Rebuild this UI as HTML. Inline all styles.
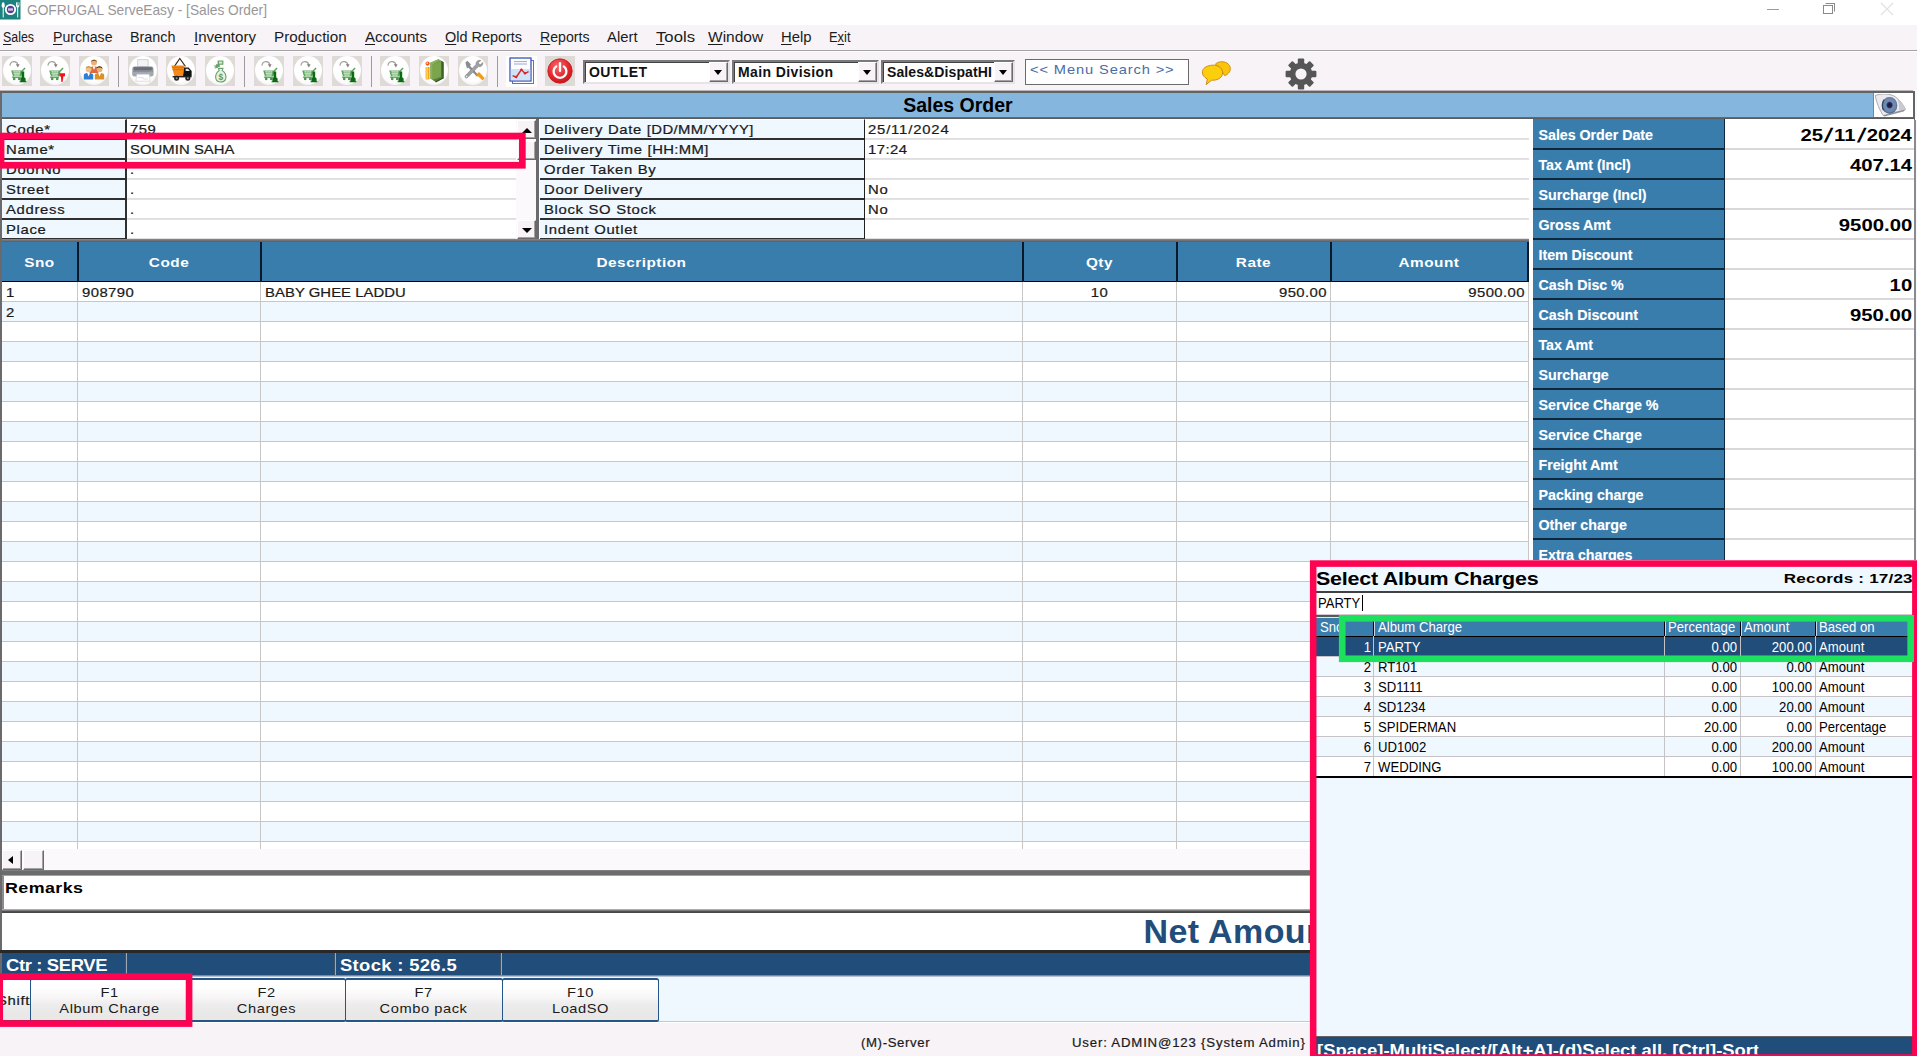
<!DOCTYPE html>
<html>
<head>
<meta charset="utf-8">
<title>GOFRUGAL ServeEasy - [Sales Order]</title>
<style>
*{box-sizing:border-box;margin:0;padding:0}
html,body{width:1917px;height:1056px;overflow:hidden;background:#f7f3f7;font-family:"Liberation Sans",sans-serif;}
.a{position:absolute}
.t{position:absolute;white-space:nowrap;color:#1a1a1a}
/* Verdana-like 10pt regular */
.v{-webkit-text-stroke:.22px #1a1a1a;font-size:13.5px;letter-spacing:.62px;line-height:20px;transform:scaleX(1.1);transform-origin:0 0}
.v.u{letter-spacing:.05px}.v.n{letter-spacing:.4px}.v.r{transform-origin:100% 0}.v.c{transform-origin:50% 0}
.vb{font-size:13.33px;font-weight:bold;letter-spacing:.45px;transform:scaleX(1.15);transform-origin:50% 0}
#titlebar{left:0;top:0;width:1917px;height:25px;background:#fff}
#menubar{left:0;top:25px;width:1917px;height:25px;background:#f7f3f7}
#menubar span{position:absolute;top:-.5px;font-size:15.2px;line-height:23px;color:#1b1b1b;white-space:nowrap;transform-origin:0 0}
#menubar u{text-decoration:underline;text-underline-offset:2px}
#tb{left:0;top:50px;width:1917px;height:41px;background:#f7f3f7;border-top:1px solid #a5a2a5;box-shadow:inset 0 1px 0 #fff}
.ic{position:absolute;top:5px;width:30px;height:30px;background:#dedbd6}
.ic:before{content:"";position:absolute;left:1px;top:0px;width:28px;height:29px;border-radius:50%;background:radial-gradient(circle at 50% 40%,#fff 60%,#f1efee 85%,#e6e3e0 100%)}
.sep{position:absolute;top:5px;width:1px;height:31px;background:#9c9a9c}
.dd{position:absolute;top:9px;height:24px;background:#fff;border:2px solid;border-color:#7b797b #e7e3e7 #e7e3e7 #7b797b;box-shadow:inset 1px 1px 0 #424142}
.dd b{position:absolute;left:4px;top:0;font-size:14px;line-height:20px;letter-spacing:0.4px;color:#111;white-space:nowrap}
.dd i{position:absolute;right:0;top:0;width:19px;height:20px;background:#f7f3f7;border:1px solid;border-color:#fff #6b696b #6b696b #fff;box-shadow:inset -1px -1px 0 #a5a2a5}
.dd i:after{content:"";position:absolute;left:4px;top:7px;border:4.5px solid transparent;border-top:5px solid #000;border-bottom:0}

.sb{background:#f7f3f7;border:1px solid;border-color:#fff #6b696b #6b696b #fff;box-shadow:inset -1px -1px 0 #a5a2a5}
.gh{top:242px;width:1.5px;height:40px;background:#0a1a2a}
.hc{top:242.5px;height:40px;line-height:40px;text-align:center;color:#fff}

.rl{left:1538.5px;margin-top:1.5px;font-size:14.3px;font-weight:bold;line-height:29px;color:#fff;letter-spacing:-0.05px;text-shadow:0 0 1px rgba(255,255,255,.35)}
.rv{right:5px;margin-top:2px;font-size:16.4px;font-weight:bold;line-height:29px;color:#000;transform:scaleX(1.24);transform-origin:100% 0}
.rv s{text-decoration:none;display:inline-block;padding:0 2.2px;transform:scale(1.08,1.2) skewX(-14deg)}
.sbt{top:954px;font-size:16px;font-weight:bold;line-height:23px;color:#fff;transform:scaleX(1.15);transform-origin:0 0}
.fb{top:977.8px;width:158.6px;height:43.9px;border:solid #24558a;border-width:2px 1.5px;border-radius:2.5px;background:linear-gradient(#fff 0,#fff 18%,#f7f5f5 45%,#ececec 62%,#e8e8e8 88%,#ece8de 100%)}
.fbt{top:985px;width:157px;text-align:center;font-size:13.33px;line-height:16px;letter-spacing:.5px;transform:scaleX(1.1);transform-origin:50% 0;color:#1a1a1a}
.ps{font-size:15px;line-height:20px;transform:scaleX(.876);transform-origin:0 0}
.ps.r{transform-origin:100% 0;text-align:right}
</style>
</head>
<body>

<svg width="0" height="0" style="position:absolute">
 <defs>
  <g id="cart">
    <path d="M8 9.6C8.2 5 14.8 3.8 15.8 8.8" fill="none" stroke="#a5a1a1" stroke-width="1.2"/>
    <path d="M13.8 8.2L17.6 8.2L15.9 11.4Z" fill="#8c7f78"/>
    <path d="M9.2 14.4H19.6L22.6 11.6L23.6 12.4L20.6 15.6L19.2 20.4H11Z" fill="#5aa25a"/>
    <path d="M11 15.8H18.6M11.4 17.4H18.2M11.8 19H17.8M12.6 14.6L13.4 20.2M15 14.6V20.2M17.3 14.6L16.7 20.2" stroke="#d9efd9" stroke-width=".7" fill="none"/>
    <path d="M11 20.4L10.4 21.6H19" stroke="#5aa25a" stroke-width="1" fill="none"/>
    <circle cx="12.2" cy="22.9" r="1.3" fill="#4c964c"/><circle cx="17.2" cy="22.9" r="1.3" fill="#4c964c"/>
  </g>
  <g id="stamp"><path d="M19.6 15.6H22.2V21.2L23.6 22.6V25.2H24.4V26.2H17.6V25.2H18.4V22.6L19.6 21.2Z" fill="#0b6b10"/></g>
  <g id="rarrow"><path d="M19.4 17.2H25V20.2L23.4 20.4L22.6 26L21.4 26L20.9 20.4L19.4 20.2Z" fill="#f01418"/></g>
 </defs>
</svg>
<!-- TITLE BAR -->
<div class="a" id="titlebar">
  <svg class="a" style="left:0;top:0" width="21" height="20" viewBox="0 0 21 20">
    <rect x="0" y="0" width="20.5" height="19.5" fill="#1b827d"/>
    <circle cx="10.5" cy="9.5" r="5.6" fill="#fff"/>
    <circle cx="10.5" cy="9.5" r="3.7" fill="#5a3f9a"/>
    <rect x="8" y="8.3" width="5" height="2.4" fill="#c9c4e6"/>
    <path d="M3.2 2.2c-1.2 0-1.6 2.2-1.6 3.6 0 1.2.6 1.8 1.1 2v9.6h1V7.8c.5-.2 1.1-.8 1.1-2 0-1.4-.4-3.6-1.6-3.6z" fill="#fff"/>
    <path d="M16 2.2v3.6c0 .9.6 1.4 1.2 1.6v10h1v-10c.6-.2 1.2-.7 1.2-1.6V2.2h-.6v3.2h-.6V2.2h-.7v3.2h-.6V2.2z" fill="#fff"/>
  </svg>
  <div class="t" id="ttl" style="left:27px;top:0px;font-size:15px;line-height:20px;color:#9a979a;transform:scaleX(.916);transform-origin:0 0">GOFRUGAL ServeEasy - [Sales Order]</div>
  <!-- window controls -->
  <div class="a" style="left:1767px;top:9px;width:12px;height:1px;background:#9b9b9b"></div>
  <div class="a" style="left:1825px;top:3px;width:10px;height:9px;border:1px solid #8a8a8a;border-left-color:transparent;border-bottom-color:transparent"></div>
  <div class="a" style="left:1823px;top:5px;width:10px;height:9px;border:1px solid #8a8a8a;background:#fff"></div>
  <svg class="a" style="left:1880px;top:2px" width="14" height="14"><path d="M1 1L13 13M13 1L1 13" stroke="#e3e0e3" stroke-width="1.1" fill="none"/></svg>
</div>

<!-- MENU BAR -->
<div class="a" id="menubar">
  <span style="left:3px;transform:scaleX(0.816)"><u>S</u>ales</span>
  <span style="left:53px;transform:scaleX(0.927)"><u>P</u>urchase</span>
  <span style="left:130px;transform:scaleX(0.946)">Branch</span>
  <span style="left:194px;transform:scaleX(0.992)"><u>I</u>nventory</span>
  <span style="left:274px;transform:scaleX(1.0)">Pro<u>d</u>uction</span>
  <span style="left:365px;transform:scaleX(0.992)"><u>A</u>ccounts</span>
  <span style="left:445px;transform:scaleX(0.95)"><u>O</u>ld Reports</span>
  <span style="left:540px;transform:scaleX(0.93)"><u>R</u>eports</span>
  <span style="left:607px;transform:scaleX(0.977)">Alert</span>
  <span style="left:656px;transform:scaleX(1.1)"><u>T</u>ools</span>
  <span style="left:708px;transform:scaleX(1.02)"><u>W</u>indow</span>
  <span style="left:781px;transform:scaleX(0.977)"><u>H</u>elp</span>
  <span style="left:829px;transform:scaleX(0.85)">E<u>x</u>it</span>
</div>

<!-- TOOLBAR -->
<div class="a" id="tb">
  <div class="ic" style="left:2px" id="ic1"><svg class="a" style="left:0;top:0" width="30" height="30" viewBox="0 0 30 30"><use href="#cart"/><use href="#stamp"/></svg></div>
  <div class="ic" style="left:40px" id="ic2"><svg class="a" style="left:0;top:0" width="30" height="30" viewBox="0 0 30 30"><use href="#cart"/><use href="#rarrow"/></svg></div>
  <div class="ic" style="left:79px" id="ic3"><svg class="a" style="left:0;top:0" width="30" height="30" viewBox="0 0 30 30"><circle cx="15" cy="6.6" r="3" fill="#e9b27a"/><path d="M12 6C12 3 18 3 18 6C17 4.6 13 4.6 12 6Z" fill="#8a5a2a"/>
 <path d="M10.6 17V12.4C10.6 10 19.4 10 19.4 12.4V17Z" fill="#d96a3a"/><path d="M13.6 10.4L15 14L16.4 10.4Z" fill="#fff"/>
 <circle cx="9.6" cy="13.2" r="2.9" fill="#efc08a"/><path d="M6.7 12.6C6.7 9.6 12.5 9.6 12.5 12.6C11.5 11.2 7.7 11.2 6.7 12.6Z" fill="#c98a2a"/>
 <path d="M4.8 23.6V19C4.8 16.4 14.2 16.4 14.2 19V23.6Z" fill="#2f7fd6"/><path d="M8.2 16.9L9.6 20.6L11 16.9Z" fill="#fff"/>
 <circle cx="20.6" cy="13.2" r="2.9" fill="#e9b27a"/><path d="M17.7 12.6C17.7 9.4 23.7 9.6 23.5 13C22.5 11.2 18.7 11.2 17.7 12.6Z" fill="#3a2a1a"/>
 <path d="M15.8 23.6V19C15.8 16.4 25.2 16.4 25.2 19V23.6Z" fill="#d9922a"/><path d="M19.2 16.9L20.6 20.6L22 16.9Z" fill="#fff"/></svg></div>
  <div class="sep" style="left:118px"></div>
  <div class="ic" style="left:128px" id="ic4"><svg class="a" style="left:0;top:0" width="30" height="30" viewBox="0 0 30 30"><path d="M9.6 3.6H20.2V10.6H9.6Z" fill="#f4f4f6" stroke="#b9bac0" stroke-width=".6"/>
 <path d="M6.6 10.6C5 10.6 4.4 11.6 4.4 12.8V18.4C4.4 19.6 5.2 20.2 6.4 20.2H23.4C24.6 20.2 25.4 19.6 25.4 18.4V12.8C25.4 11.6 24.8 10.6 23.2 10.6Z" fill="#8d9099"/>
 <path d="M6 11.2H23.8V14.2H6Z" fill="#6b6e77"/><path d="M4.6 16H25.2V18.6C25.2 19.6 24.6 20.2 23.4 20.2H6.4C5.2 20.2 4.6 19.6 4.6 18.6Z" fill="#a4a7af"/>
 <circle cx="23.4" cy="15.4" r=".8" fill="#4fd04f"/>
 <path d="M8.8 18.2H21.2L22.2 25.2H7.8Z" fill="#fff" stroke="#c9cad0" stroke-width=".6"/><path d="M10 21.6H15L15.6 23H20" stroke="#c9cad0" stroke-width=".6" fill="none"/></svg></div>
  <div class="ic" style="left:166px" id="ic5"><svg class="a" style="left:0;top:0" width="30" height="30" viewBox="0 0 30 30"><path d="M8.4 10.4L13.8 2.4L19.4 10.4" fill="none" stroke="#3a2a1a" stroke-width="1.1"/>
 <path d="M5.4 9.6H18.6L17 20H8.4Z" fill="#f58a1a"/><path d="M6 11.4H18.2M6.6 13.6H17.8" stroke="#d96a0a" stroke-width=".8"/>
 <path d="M18.2 11.6H22.6L25.6 15V20H17Z" fill="#111"/><path d="M19.6 12.8H22L23.8 15H19.6Z" fill="#dde6ee"/>
 <path d="M6.6 20H25.6V21.4H6.6Z" fill="#222"/>
 <circle cx="10.6" cy="22.2" r="2.5" fill="#222"/><circle cx="10.6" cy="22.2" r="1" fill="#999"/>
 <circle cx="21.8" cy="22.2" r="2.5" fill="#222"/><circle cx="21.8" cy="22.2" r="1" fill="#999"/></svg></div>
  <div class="ic" style="left:205px" id="ic6"><svg class="a" style="left:0;top:0" width="30" height="30" viewBox="0 0 30 30"><path d="M12.6 4.4H18.4V8.8H14.8V11H11V8.2H12.6Z" fill="#6aa36a"/><path d="M14 5.6H17.2V7.6H14Z" fill="#d4ead4"/>
 <path d="M9.4 9.4L12.8 11.4M9.6 12L12 11.4" stroke="#6aa36a" stroke-width="1.2"/>
 <path d="M13.4 12.4H18L17.2 14.4C20.4 16 21.6 20 20.6 23.2C19.8 25.2 18 26 15.8 26C13.4 26 11.6 25.2 11 23.2C10 20 11.2 16 14.2 14.4Z" fill="#e6f2e6" stroke="#6aa36a" stroke-width="1.1"/>
 <text x="15.8" y="23.6" font-family="Liberation Sans" font-size="8.4" font-weight="bold" fill="#5a985a" text-anchor="middle">$</text></svg></div>
  <div class="sep" style="left:244px"></div>
  <div class="ic" style="left:254px" id="ic7"><svg class="a" style="left:0;top:0" width="30" height="30" viewBox="0 0 30 30"><use href="#cart"/><use href="#stamp"/></svg></div>
  <div class="ic" style="left:293px" id="ic8"><svg class="a" style="left:0;top:0" width="30" height="30" viewBox="0 0 30 30"><use href="#cart"/><use href="#stamp"/></svg></div>
  <div class="ic" style="left:332px" id="ic9"><svg class="a" style="left:0;top:0" width="30" height="30" viewBox="0 0 30 30"><use href="#cart"/><use href="#stamp"/></svg></div>
  <div class="sep" style="left:371px"></div>
  <div class="ic" style="left:380px" id="ic10"><svg class="a" style="left:0;top:0" width="30" height="30" viewBox="0 0 30 30"><use href="#cart"/><use href="#stamp"/></svg></div>
  <div class="ic" style="left:419px" id="ic11"><svg class="a" style="left:0;top:0" width="30" height="30" viewBox="0 0 30 30"><path d="M11.4 6.8L19.4 3.2L24.6 6.2V21.8L16.6 26L11.4 22.4Z" fill="#5a7f3a"/>
 <path d="M11.4 6.8L19.4 3.2L21.6 4.6L13.8 8.4V23.8L11.4 22.4Z" fill="#8ab15a"/><path d="M13.8 8.4L22.4 4.8V20.4L13.8 23.8Z" fill="#7aa54a"/>
 <path d="M22.4 4.8L24.6 6.2V21.8L22.4 20.4Z" fill="#3f5f2a"/><path d="M16.6 26L24.6 21.8" stroke="#2f4a1f" stroke-width="1.2"/>
 <circle cx="8.6" cy="7.6" r="2.1" fill="#ee5a1a"/><circle cx="8.2" cy="7.1" r=".9" fill="#ffd9b0"/>
 <path d="M6.6 11H10.6V23.4H6.6Z" fill="#f7a81a"/><path d="M7.4 11H8.8V23.4H7.4Z" fill="#ffd66a"/></svg></div>
  <div class="ic" style="left:458px" id="ic12"><svg class="a" style="left:0;top:0" width="30" height="30" viewBox="0 0 30 30"><path d="M7.4 6.4L9.4 4.8L13 8.6L12 9.8L20.6 19.2L19 20.8L10.2 11.6L9 12.4Z" fill="#8a8c90"/>
 <path d="M18.2 18.4L21 16L26.2 21.6C27 22.6 25 24.8 23.8 23.8Z" fill="#f59a1a"/>
 <path d="M22.8 4.6C20.4 3.6 17.6 5.4 18 8.4L7.4 19.6C6.2 21 7.8 23 9.4 21.8L20.4 10.6C23 11.2 25.4 9 24.8 6.4L22.6 8.6L20.8 8L20.4 6.4Z" fill="#9ea0a4" stroke="#76787c" stroke-width=".5"/>
 <circle cx="8.6" cy="20.6" r=".8" fill="#f1f1f1"/></svg></div>
  <div class="sep" style="left:497px"></div>
  
  <!-- chart icon -->
  <svg class="a" style="left:506px;top:5px" width="31" height="31" viewBox="0 0 31 31">
    <rect x="0" y="0" width="31" height="31" fill="#fff"/>
    <rect x="6.5" y="4.5" width="21" height="23" fill="#fff" stroke="#5a72c8" stroke-width="1"/>
    <rect x="4" y="2" width="21" height="23" fill="#fdfdff" stroke="#3a55b8" stroke-width="1.3"/>
    <rect x="4.8" y="13" width="19.4" height="11.2" fill="#cfe2f7"/>
    <path d="M8 5.6H21M8 8H21" stroke="#9aa9d8" stroke-width="1"/>
    <path d="M6.6 19.6L10.2 21.2L15.4 13.6L19 17.4L22.6 15.6" fill="none" stroke="#d8262a" stroke-width="1.5"/>
    <circle cx="10.2" cy="21" r="1.2" fill="#d8262a"/><circle cx="15.4" cy="13.8" r="1.2" fill="#d8262a"/><circle cx="19" cy="17.2" r="1.2" fill="#d8262a"/>
  </svg>
  <!-- power icon -->
  <div class="a" style="left:545px;top:5px;width:30px;height:30px;background:#dedbd6"></div>
  <svg class="a" style="left:545px;top:5px" width="30" height="30" viewBox="0 0 30 30">
    <defs><radialGradient id="pg" cx=".4" cy=".3" r=".8"><stop offset="0" stop-color="#f6676a"/><stop offset=".6" stop-color="#e2242a"/><stop offset="1" stop-color="#b8161a"/></radialGradient></defs>
    <circle cx="15" cy="15" r="12.2" fill="url(#pg)" stroke="#c4181c" stroke-width=".8"/>
    <path d="M11.2 10.4A6.4 6.4 0 1 0 18.8 10.4" fill="none" stroke="#fff" stroke-width="2.3" stroke-linecap="round"/>
    <path d="M15 7.2V15" stroke="#fff" stroke-width="2.3" stroke-linecap="round"/>
  </svg>
  <!-- chat icon -->
  <svg class="a" style="left:1201px;top:9px" width="32" height="28" viewBox="0 0 32 28">
    <path d="M14.4 4.2C17.6 0.4 26.4 0.8 28.8 6.2C30.6 10.4 27.6 14.4 23.6 15.6L21.6 12.4C19.8 8.6 17.4 6 14.4 4.2Z" fill="#f9c40a" stroke="#c98a0a" stroke-width=".9"/>
    <path d="M11.4 5.2C17.4 4.6 21.8 8.6 21.6 13C21.4 17.6 16.8 20.6 10.6 20.2L5.2 24.6L6.4 19C2.4 17.2 0.8 13.6 1.6 10.6C2.6 7.4 6.4 5.6 11.4 5.2Z" fill="#fbcf0e" stroke="#c9820a" stroke-width=".9"/>
  </svg>
  <!-- gear icon -->
  <svg class="a" style="left:1285px;top:7px" width="32" height="32" viewBox="-16 -16 32 32">
    <g fill="#565656">
      <rect x="-3.2" y="-15.4" width="6.4" height="8" rx="1"/><rect x="-3.2" y="7.4" width="6.4" height="8" rx="1"/>
      <g transform="rotate(45)"><rect x="-3.2" y="-15.4" width="6.4" height="8" rx="1"/><rect x="-3.2" y="7.4" width="6.4" height="8" rx="1"/></g>
      <g transform="rotate(90)"><rect x="-3.2" y="-15.4" width="6.4" height="8" rx="1"/><rect x="-3.2" y="7.4" width="6.4" height="8" rx="1"/></g>
      <g transform="rotate(135)"><rect x="-3.2" y="-15.4" width="6.4" height="8" rx="1"/><rect x="-3.2" y="7.4" width="6.4" height="8" rx="1"/></g>
    </g>
    <circle r="8.4" fill="none" stroke="#565656" stroke-width="5.6"/>
  </svg>

  <div class="dd" style="left:583px;width:147px"><b>OUTLET</b><i></i></div>
  <div class="dd" style="left:732px;width:147px"><b>Main Division</b><i></i></div>
  <div class="dd" style="left:881px;width:134px"><b style="letter-spacing:0.1px">Sales&amp;DispatHI</b><i></i></div>
  <div class="a" style="left:1025px;top:7.5px;width:163.5px;height:26.5px;background:#fff;border:1.5px solid #6b6b6b"></div>
  <div class="t" style="left:1030px;top:9px;font-size:13.33px;line-height:20px;letter-spacing:.8px;transform:scaleX(1.1);transform-origin:0 0;color:#4a6da5">&lt;&lt; Menu Search &gt;&gt;</div>
</div>

<!-- MAIN WINDOW FRAME -->
<div class="a" style="left:0;top:89.5px;width:1915.2px;height:3.8px;background:linear-gradient(#f7f3f7,#b5b2b5 18%,#6b696b 32%,#636563 40%,#636563)"></div>
<div class="a" style="left:0;top:93px;width:2px;height:885px;background:#6b696b"></div>
<!-- blue header -->
<div class="a" style="left:2px;top:93px;width:1912px;height:24px;background:#84b6de"></div>
<div class="a" style="left:1913px;top:90px;width:4px;height:473px;background:#f7fbff"></div>
<div class="a" style="left:1913px;top:90.5px;width:2.2px;height:29px;background:#636563"></div>
<div class="a" style="left:1913.9px;top:119.5px;width:2.1px;height:443px;background:#8c8a8c"></div>
<div class="a" style="left:2px;top:116.6px;width:1912px;height:3px;background:linear-gradient(#6b7d94,#5a595a 30%,#636163)"></div>
<div class="t" id="so" style="left:903.2px;top:93px;font-size:19.5px;font-weight:bold;line-height:24px;color:#000;letter-spacing:0px">Sales Order</div>
<div class="a" style="left:1873.2px;top:93px;width:40px;height:24px;background:#fff;border-left:1px solid #73869c"></div>
<svg class="a" style="left:1875px;top:94px" width="38" height="23" viewBox="0 0 38 23">
  <defs><radialGradient id="eg" cx="0.5" cy="0.48" r="0.55"><stop offset="0" stop-color="#1a0f3a"/><stop offset="0.28" stop-color="#2a2a55"/><stop offset="0.42" stop-color="#6f8fb0"/><stop offset="0.75" stop-color="#6d86ad"/><stop offset="1" stop-color="#34506f"/></radialGradient></defs>
  <path d="M0.2 1.6C5 -0.4 15 -1.4 21.4 3.6C25.6 7 28.4 11 30.4 15.4C24 17.4 15 19.6 8.4 21.6C5 17 1.6 9 0.2 1.6Z" fill="#eceaee" stroke="#a3a3a6" stroke-width="0.9"/>
  <path d="M21.4 3.6C25.6 7 28.4 11 30.4 15.4L24 17C24.6 12 23.6 7.4 21.4 3.6Z" fill="#c9c9cf"/>
  <ellipse cx="14.6" cy="11.4" rx="7.7" ry="8.3" fill="url(#eg)"/>
  <path d="M8.6 16.4C7.2 13.4 7 9 9 5.6" fill="none" stroke="#24405e" stroke-width="1.4" opacity=".8"/>
  <path d="M8.4 21.6C15 19.6 24 17.4 30.4 15.4L28.6 17.6L9.4 22.6Z" fill="#6a6a70" opacity=".7"/>
</svg>

<!-- LEFT FORM -->
<div class="a" style="left:2px;top:119px;width:1528px;height:121px;background:#fff"></div>
<div class="a" id="f1" style="left:2px;top:119px;width:125px;height:121px;background:
 repeating-linear-gradient(#eff7ff 0,#eff7ff 18px,#313031 18px,#313031 20px);border-right:2px solid #313031;border-top:1px solid #fff"></div>
<div class="a" style="left:127px;top:120px;width:389px;height:120px;background:repeating-linear-gradient(#fff 0,#fff 18px,#e4e2e4 18px,#dddbdd 19px,#e9e7e9 20px)"></div>
<!-- left form scrollbar -->
<div class="a" style="left:516px;top:119px;width:21px;height:121px;background:#fbf9fb"></div>
<div class="a sb" style="left:517px;top:120px;width:18.5px;height:19px"></div>
<div class="a sb" style="left:517px;top:141px;width:18.5px;height:19px"></div>
<div class="a sb" style="left:517px;top:220px;width:18.5px;height:19px"></div>
<div class="a" style="left:522px;top:128px;border:5px solid transparent;border-bottom:5px solid #000;border-top:0"></div>
<div class="a" style="left:522px;top:228px;border:5px solid transparent;border-top:5px solid #000;border-bottom:0"></div>
<div class="a" style="left:536.3px;top:119px;width:2.7px;height:121px;background:#6b696b"></div>
<div class="t v" style="left:6px;top:120px">Code*</div>
<div class="t v" style="left:6px;top:140px">Name*</div>
<div class="t v" style="left:6px;top:160px">DoorNo</div>
<div class="t v" style="left:6px;top:180px">Street</div>
<div class="t v" style="left:6px;top:200px">Address</div>
<div class="t v" style="left:6px;top:220px">Place</div>
<div class="t v n" style="left:130px;top:120px">759</div>
<div class="t v u" id="nm" style="left:130px;top:140px">SOUMIN SAHA</div>
<div class="t v" style="left:130px;top:160px">.</div>
<div class="t v" style="left:130px;top:180px">.</div>
<div class="t v" style="left:130px;top:200px">.</div>
<div class="t v" style="left:130px;top:220px">.</div>

<!-- RIGHT FORM -->
<div class="a" id="f2" style="left:540px;top:119px;width:324.5px;height:121px;background:
 repeating-linear-gradient(#eff7ff 0,#eff7ff 18px,#313031 18px,#313031 20px);border-right:1.5px solid #212021;border-top:1px solid #fff"></div>
<div class="a" style="left:865px;top:120px;width:665px;height:120px;background:repeating-linear-gradient(#fff 0,#fff 18px,#e4e2e4 18px,#dddbdd 19px,#e9e7e9 20px)"></div>
<div class="t v" id="dd1" style="left:544px;top:120px">Delivery Date <span style="letter-spacing:.35px">[DD/MM/YYYY]</span></div>
<div class="t v" style="left:544px;top:140px">Delivery Time <span style="letter-spacing:.35px">[HH:MM]</span></div>
<div class="t v" style="left:544px;top:160px">Order Taken By</div>
<div class="t v" style="left:544px;top:180px">Door Delivery</div>
<div class="t v" style="left:544px;top:200px">Block SO Stock</div>
<div class="t v" style="left:544px;top:220px">Indent Outlet</div>
<div class="t v n" id="dt1" style="left:868px;top:120px;letter-spacing:.75px">25/11/2024</div>
<div class="t v n" style="left:868px;top:140px">17:24</div>
<div class="t v" style="left:868px;top:180px">No</div>
<div class="t v" style="left:868px;top:200px">No</div>
<div class="a" style="left:2px;top:239px;width:1528px;height:3px;background:linear-gradient(#8c8a8c,#5a595a)"></div>

<!-- GRID -->
<div class="a" id="grid" style="left:2px;top:282px;width:1527px;height:567px;background:
 linear-gradient(90deg,transparent 75px,#c6c7c6 75px,#c6c7c6 76px,transparent 76px,transparent 258px,#c6c7c6 258px,#c6c7c6 259px,transparent 259px,transparent 1020px,#c6c7c6 1020px,#c6c7c6 1021px,transparent 1021px,transparent 1174px,#c6c7c6 1174px,#c6c7c6 1175px,transparent 1175px,transparent 1328px,#c6c7c6 1328px,#c6c7c6 1329px,transparent 1329px,transparent 1526px,#c6c7c6 1526px),
 repeating-linear-gradient(#fff 0,#fff 19px,#c6c7c6 19px,#c6c7c6 20px,#eff7ff 20px,#eff7ff 39px,#c6c7c6 39px,#c6c7c6 40px)"></div>
<div class="a" style="left:2px;top:242px;width:1527px;height:40px;background:#397dad;border-bottom:1.5px solid #000"></div>
<div class="a gh" style="left:77px"></div><div class="a gh" style="left:260px"></div><div class="a gh" style="left:1022px"></div><div class="a gh" style="left:1176px"></div><div class="a gh" style="left:1330px"></div><div class="a gh" style="left:1527px"></div>
<div class="t vb hc" style="left:2px;width:75px">Sno</div>
<div class="t vb hc" style="left:78px;width:182px">Code</div>
<div class="t vb hc" id="hdesc" style="left:261px;width:761px">Description</div>
<div class="t vb hc" style="left:1023px;width:153px">Qty</div>
<div class="t vb hc" style="left:1177px;width:153px">Rate</div>
<div class="t vb hc" id="hamt" style="left:1331px;width:196px">Amount</div>
<div class="t v" style="left:6px;top:283px">1</div>
<div class="t v" style="left:6px;top:303px">2</div>
<div class="t v n" style="left:82px;top:283px">908790</div>
<div class="t v u" id="bgl" style="left:265px;top:283px">BABY GHEE LADDU</div>
<div class="t v n c" style="left:1023px;width:153px;top:283px;text-align:center">10</div>
<div class="t v n r" id="r950" style="left:1177px;width:150px;top:283px;text-align:right">950.00</div>
<div class="t v n r" id="r9500" style="left:1331px;width:194px;top:283px;text-align:right">9500.00</div>
<div class="a" style="left:1529px;top:119px;width:5px;height:445px;background:#fff"></div>
<!-- RIGHT PANEL -->
<div class="a" style="left:1533px;top:119px;width:192px;height:445px;background:repeating-linear-gradient(#397dad 0,#397dad 28.3px,#10283d 28.3px,#10283d 30px) 0 1px;border-right:1.5px solid #10283d"></div>
<div class="a" style="left:1725px;top:119px;width:189px;height:445px;background:repeating-linear-gradient(#fff 0,#fff 28.5px,#d9d7d9 28.5px,#d9d7d9 30px) 0 1px"></div>
<div class="t rl" style="top:119px">Sales Order Date</div>
<div class="t rv" style="top:119px">25<s>/</s>11<s>/</s>2024</div>
<div class="t rl" style="top:149px">Tax Amt (Incl)</div>
<div class="t rv" style="top:149px">407.14</div>
<div class="t rl" style="top:179px">Surcharge (Incl)</div>
<div class="t rl" style="top:209px">Gross Amt</div>
<div class="t rv" style="top:209px">9500.00</div>
<div class="t rl" style="top:239px">Item Discount</div>
<div class="t rl" style="top:269px">Cash Disc %</div>
<div class="t rv" style="top:269px">10</div>
<div class="t rl" style="top:299px">Cash Discount</div>
<div class="t rv" style="top:299px">950.00</div>
<div class="t rl" style="top:329px">Tax Amt</div>
<div class="t rl" style="top:359px">Surcharge</div>
<div class="t rl" style="top:389px">Service Charge %</div>
<div class="t rl" style="top:419px">Service Charge</div>
<div class="t rl" style="top:449px">Freight Amt</div>
<div class="t rl" style="top:479px">Packing charge</div>
<div class="t rl" style="top:509px">Other charge</div>
<div class="t rl" style="top:539px">Extra charges</div>

<!-- BOTTOM -->
<div class="a" style="left:2px;top:849px;width:1527px;height:22px;background:#fbf9fb"></div>
<div class="a sb" style="left:2px;top:849.5px;width:20.3px;height:20.6px"></div>
<div class="a sb" style="left:22.6px;top:849.5px;width:21.3px;height:20.6px"></div>
<div class="a" style="left:8px;top:855.5px;border:4.6px solid transparent;border-right:5.2px solid #000;border-left:0"></div>
<div class="a" style="left:2px;top:870.3px;width:1400px;height:5.2px;background:linear-gradient(#8c8a8c,#6b6d6b 25%,#6b6d6b)"></div>
<div class="a" style="left:2px;top:875.4px;width:1400px;height:33.6px;background:#fff;border-left:2.4px solid #8c8a8c;border-top:1px solid #a5a2a5"></div>
<div class="t" id="rem" style="left:5.4px;top:877px;font-size:15px;font-weight:bold;line-height:22px;letter-spacing:.35px;transform:scaleX(1.19);transform-origin:0 0;color:#000">Remarks</div>
<div class="a" style="left:2px;top:909px;width:1400px;height:4px;background:linear-gradient(#c6c3c6,#525152 60%,#424142)"></div>
<div class="a" style="left:2px;top:913px;width:1400px;height:37px;background:#fff"></div>
<div class="t" id="net" style="left:1143.5px;top:913px;font-size:34px;font-weight:bold;line-height:37px;color:#214d7b;letter-spacing:.4px">Net Amount</div>
<div class="a" style="left:0px;top:950px;width:1400px;height:3px;background:#292829"></div>
<div class="a" style="left:2px;top:953px;width:1400px;height:22px;background:#214d7b"></div>
<div class="a" style="left:125px;top:953px;width:2px;height:22px;background:linear-gradient(90deg,#10283d,#ced3de)"></div>
<div class="a" style="left:334px;top:953px;width:2px;height:22px;background:linear-gradient(90deg,#10283d,#ced3de)"></div>
<div class="a" style="left:500px;top:953px;width:2px;height:22px;background:linear-gradient(90deg,#10283d,#ced3de)"></div>
<div class="t sbt" id="ctr" style="left:6px;letter-spacing:-.3px">Ctr : SERVE</div>
<div class="t sbt" id="stk" style="left:340px;letter-spacing:.3px">Stock : 526.5</div>
<div class="a" style="left:0px;top:975px;width:1400px;height:2px;background:linear-gradient(#5a6d84,#d6dbe7)"></div>
<div class="a" style="left:0px;top:977px;width:1400px;height:45px;background:#eff7ff;border-bottom:1px solid #c6c7c6"></div>
<div class="a" style="left:0px;top:1022px;width:1400px;height:1px;background:#fff"></div>
<div class="a fb" style="left:-5px;width:37px"></div>
<div class="t v" style="left:-3px;top:991px">Shift</div>
<div class="a fb" style="left:30.3px"></div>
<div class="a fb" style="left:187.4px"></div>
<div class="a fb" style="left:344.5px"></div>
<div class="a fb" style="left:501.6px;width:157.4px"></div>
<div class="t fbt" style="left:31px">F1<br>Album Charge</div>
<div class="t fbt" style="left:188px">F2<br>Charges</div>
<div class="t fbt" style="left:345px">F7<br>Combo pack</div>
<div class="t fbt" style="left:502px">F10<br>LoadSO</div>
<div class="t" id="msrv" style="-webkit-text-stroke:.2px #1a1a1a;left:861px;top:1035px;font-size:12px;line-height:16px;letter-spacing:.56px;transform:scaleX(1.1);transform-origin:0 0">(M)-Server</div>
<div class="t" id="usr" style="-webkit-text-stroke:.2px #1a1a1a;left:1072px;top:1035px;font-size:12px;line-height:16px;letter-spacing:.74px;transform:scaleX(1.1);transform-origin:0 0">User: ADMIN@123 {System Admin}</div>
<!-- red highlight boxes -->

<!-- POPUP -->
<div class="a" id="pop" style="left:1310px;top:560px;width:607px;height:496px;background:#eff7ff"></div>
<div class="t" id="ptitle" style="left:1316px;top:566px;font-size:18.67px;font-weight:bold;line-height:25px;letter-spacing:-.2px;transform:scaleX(1.15);transform-origin:0 0;color:#000">Select Album Charges</div>
<div class="t" id="prec" style="right:4px;top:569px;font-size:13.33px;font-weight:bold;line-height:20px;letter-spacing:.15px;transform:scaleX(1.28);transform-origin:100% 0;color:#000">Records : 17/23</div>
<div class="a" style="left:1316px;top:591px;width:597px;height:2px;background:#424142"></div>
<div class="a" style="left:1316px;top:593px;width:597px;height:21px;background:#fff"></div>
<div class="t" style="left:1317.5px;top:592.5px;color:#000;font-size:14px;line-height:20px;transform:scaleX(.93);transform-origin:0 0">PARTY</div>
<div class="a" style="left:1361.5px;top:595px;width:1px;height:15.5px;background:#000"></div>
<div class="a" style="left:1316px;top:614px;width:597px;height:4px;background:linear-gradient(#d2cbcf 0,#d2cbcf 25%,#525552 25%,#5a5d5a 68%,#dfe8f2 68%,#dfe8f2 92%,#397dad 92%)"></div>
<div class="a" style="left:1316px;top:618px;width:597px;height:19px;background:#397dad;border-bottom:1px solid #000"></div>
<div class="a" style="left:1316px;top:637px;width:597px;height:140px;background:repeating-linear-gradient(#fff 0,#fff 19px,#c6c3c6 19px,#c6c3c6 20px,#eff7ff 20px,#eff7ff 39px,#c6c3c6 39px,#c6c3c6 40px)"></div>
<div class="a" style="left:1316px;top:637px;width:597px;height:19px;background:#214d7b"></div>
<div class="a" style="left:1316px;top:776px;width:597px;height:1.5px;background:#000"></div>
<div class="a" style="left:1373px;top:618px;width:1px;height:158px;background:#c6c3c6"></div>
<div class="a" style="left:1373px;top:618px;width:2px;height:18px;background:linear-gradient(90deg,#000 50%,#ced3de 50%)"></div>
<div class="a" style="left:1664px;top:618px;width:1px;height:158px;background:#c6c3c6"></div>
<div class="a" style="left:1664px;top:618px;width:2px;height:18px;background:linear-gradient(90deg,#000 50%,#ced3de 50%)"></div>
<div class="a" style="left:1740px;top:618px;width:1px;height:158px;background:#c6c3c6"></div>
<div class="a" style="left:1740px;top:618px;width:2px;height:18px;background:linear-gradient(90deg,#000 50%,#ced3de 50%)"></div>
<div class="a" style="left:1815px;top:618px;width:1px;height:158px;background:#c6c3c6"></div>
<div class="a" style="left:1815px;top:618px;width:2px;height:18px;background:linear-gradient(90deg,#000 50%,#ced3de 50%)"></div>
<div class="t ps" style="left:1320px;top:617px;color:#fff">Sno</div>
<div class="t ps" style="left:1378px;top:617px;color:#fff">Album Charge</div>
<div class="t ps" style="left:1668px;top:617px;color:#fff;width:81px;overflow:hidden">Percentage</div>
<div class="t ps" style="left:1744px;top:617px;color:#fff">Amount</div>
<div class="t ps" style="left:1819px;top:617px;color:#fff">Based on</div>
<div class="t ps r" style="left:1316px;width:55px;top:637px;color:#fff">1</div>
<div class="t ps" style="left:1378px;top:637px;color:#fff">PARTY</div>
<div class="t ps r" style="left:1665px;width:72px;top:637px;color:#fff">0.00</div>
<div class="t ps r" style="left:1741px;width:71px;top:637px;color:#fff">200.00</div>
<div class="t ps" style="left:1819px;top:637px;color:#fff">Amount</div>
<div class="t ps r" style="left:1316px;width:55px;top:657px;color:#000">2</div>
<div class="t ps" style="left:1378px;top:657px;color:#000">RT101</div>
<div class="t ps r" style="left:1665px;width:72px;top:657px;color:#000">0.00</div>
<div class="t ps r" style="left:1741px;width:71px;top:657px;color:#000">0.00</div>
<div class="t ps" style="left:1819px;top:657px;color:#000">Amount</div>
<div class="t ps r" style="left:1316px;width:55px;top:677px;color:#000">3</div>
<div class="t ps" style="left:1378px;top:677px;color:#000">SD1111</div>
<div class="t ps r" style="left:1665px;width:72px;top:677px;color:#000">0.00</div>
<div class="t ps r" style="left:1741px;width:71px;top:677px;color:#000">100.00</div>
<div class="t ps" style="left:1819px;top:677px;color:#000">Amount</div>
<div class="t ps r" style="left:1316px;width:55px;top:697px;color:#000">4</div>
<div class="t ps" style="left:1378px;top:697px;color:#000">SD1234</div>
<div class="t ps r" style="left:1665px;width:72px;top:697px;color:#000">0.00</div>
<div class="t ps r" style="left:1741px;width:71px;top:697px;color:#000">20.00</div>
<div class="t ps" style="left:1819px;top:697px;color:#000">Amount</div>
<div class="t ps r" style="left:1316px;width:55px;top:717px;color:#000">5</div>
<div class="t ps" style="left:1378px;top:717px;color:#000">SPIDERMAN</div>
<div class="t ps r" style="left:1665px;width:72px;top:717px;color:#000">20.00</div>
<div class="t ps r" style="left:1741px;width:71px;top:717px;color:#000">0.00</div>
<div class="t ps" style="left:1819px;top:717px;color:#000">Percentage</div>
<div class="t ps r" style="left:1316px;width:55px;top:737px;color:#000">6</div>
<div class="t ps" style="left:1378px;top:737px;color:#000">UD1002</div>
<div class="t ps r" style="left:1665px;width:72px;top:737px;color:#000">0.00</div>
<div class="t ps r" style="left:1741px;width:71px;top:737px;color:#000">200.00</div>
<div class="t ps" style="left:1819px;top:737px;color:#000">Amount</div>
<div class="t ps r" style="left:1316px;width:55px;top:757px;color:#000">7</div>
<div class="t ps" style="left:1378px;top:757px;color:#000">WEDDING</div>
<div class="t ps r" style="left:1665px;width:72px;top:757px;color:#000">0.00</div>
<div class="t ps r" style="left:1741px;width:71px;top:757px;color:#000">100.00</div>
<div class="t ps" style="left:1819px;top:757px;color:#000">Amount</div>
<div class="a" style="left:1316px;top:1036px;width:597px;height:2.4px;background:linear-gradient(#8c8e8c,#424142 45%,#3a4552)"></div>
<div class="a" style="left:1316px;top:1038.4px;width:597px;height:17.6px;background:#214d7b"></div>
<div class="t" id="phelp" style="height:16px;overflow:hidden;left:1317px;top:1040px;font-size:16px;font-weight:bold;line-height:22px;letter-spacing:0;transform:scaleX(1.15);transform-origin:0 0;color:#fff">[Space]-MultiSelect/[Alt+A]-(d)Select all, [Ctrl]-Sort</div>


<svg class="a" style="left:0;top:0;pointer-events:none" width="1917" height="1056" viewBox="0 0 1917 1056">
 <rect x="1.05" y="136.05" width="521.3" height="29.2" fill="none" stroke="#fd0351" stroke-width="6.7"/>
 <rect x="-0.28" y="976.62" width="189.35" height="46.95" fill="none" stroke="#fd0351" stroke-width="6.65"/>
 <rect x="1313.18" y="563.58" width="602.2" height="493.9" fill="none" stroke="#fd0351" stroke-width="6.55"/>
 <rect x="1342.22" y="618.32" width="568.45" height="40.45" fill="none" stroke="#1ce05e" stroke-width="6.65"/>
</svg>
</body>
</html>
